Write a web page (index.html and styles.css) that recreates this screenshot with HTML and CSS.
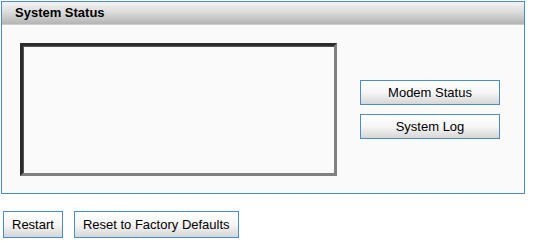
FILE: index.html
```html
<!DOCTYPE html>
<html lang="en">
<head>
  <meta charset="UTF-8">
  <title>System Status</title>
  <link rel="stylesheet" href="styles.css">
</head>
<body>
  <div class="panel">
    <div class="panel-header">System Status</div>
    <div class="panel-body">
      <textarea class="status-box" readonly></textarea>
      <div class="side-buttons">
        <button class="btn btn-wide">Modem Status</button>
        <button class="btn btn-wide">System Log</button>
      </div>
    </div>
  </div>

  <div class="actions">
    <button class="btn">Restart</button>
    <button class="btn">Reset to Factory Defaults</button>
  </div>
</body>
</html>
```

FILE: styles.css
```css
:root {
  --border-blue: #4a8cca;
  --panel-bg: #fafafa;
}

* {
  box-sizing: border-box;
}

body {
  margin: 0;
  font-family: 'Liberation Sans', Arial, sans-serif;
  font-size: 13px;
  color: #000;
  background: #fff;
}

.panel {
  width: 524px;
  margin: 1px 0 0 1px;
  border: 1px solid var(--border-blue);
  background: var(--panel-bg);
}

.panel-header {
  height: 23px;
  padding-left: 13px;
  line-height: 21px;
  font-weight: bold;
  background: linear-gradient(to bottom, #f4f4f4 0%, #dcdcdc 45%, #b4b4b4 100%);
  border-bottom: 1px solid #cdcdcd;
}

.panel-body {
  display: flex;
  align-items: center;
  padding: 18px 0 17px 18px;
}

.status-box {
  width: 317px;
  height: 133px;
  margin: 0;
  resize: none;
  background: var(--panel-bg);
  border: 3px solid;
  border-color: #2c2c2c #808080 #808080 #2c2c2c;
  box-shadow: inset 1px 1px 0 #555;
}

.side-buttons {
  display: flex;
  flex-direction: column;
  gap: 9px;
  margin-left: 23px;
}

.btn {
  height: 25px;
  padding: 0 8px;
  font-family: inherit;
  font-size: 13px;
  color: #000;
  border: 1px solid var(--border-blue);
  border-radius: 0;
  background: linear-gradient(to bottom, #ffffff 0%, #f6f6f6 50%, #d6d6d6 100%);
  cursor: pointer;
}

.btn-wide {
  width: 140px;
}

.actions {
  display: flex;
  gap: 11px;
  margin: 17px 0 0 3px;
}

.actions .btn {
  height: 27px;
}
```
